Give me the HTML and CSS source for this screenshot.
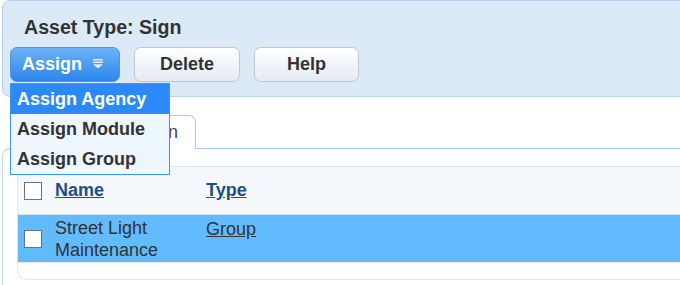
FILE: index.html
```html
<!DOCTYPE html>
<html lang="en">
<head>
    <meta charset="UTF-8">
    <title>Asset Type: Sign</title>
    <link rel="stylesheet" href="styles.css">
</head>
<body>
    <div class="header">
        <h2>Asset Type: Sign</h2>
        <div class="toolbar">
            <div class="menu-wrap">
                <button class="btn btn-primary">Assign
                    <svg class="menu-icon" width="10" height="10" viewBox="0 0 10 10">
                        <rect x="0" y="0" width="10" height="1.4" fill="#fff" opacity="0.85"/>
                        <rect x="0" y="2.6" width="10" height="1.4" fill="#fff" opacity="0.85"/>
                        <path d="M0 5.2 H10 L5 9.6 Z" fill="#fff" opacity="0.85"/>
                    </svg>
                </button>
                <ul class="menu">
                    <li class="active">Assign Agency</li>
                    <li>Assign Module</li>
                    <li>Assign Group</li>
                </ul>
            </div>
            <button class="btn">Delete</button>
            <button class="btn btn-help">Help</button>
        </div>
    </div>

    <div class="tabs">
        <div class="tab">Association</div>
    </div>

    <div class="content">
        <div class="grid">
            <table>
                <thead>
                    <tr>
                        <th class="check"><span class="box"></span></th>
                        <th class="col-name"><a href="#">Name</a></th>
                        <th><a href="#">Type</a></th>
                    </tr>
                </thead>
                <tbody>
                    <tr class="selected">
                        <td class="check"><span class="box"></span></td>
                        <td class="col-name">Street Light<br>Maintenance</td>
                        <td><a href="#">Group</a></td>
                    </tr>
                </tbody>
            </table>
        </div>
    </div>
</body>
</html>
```

FILE: styles.css
```css
body {
    margin: 0;
    font-family: "Liberation Sans", Arial, sans-serif;
    font-size: 18px;
    color: #333;
    background-color: #fff;
    overflow: hidden;
}

.header {
    margin-left: 2px;
    margin-right: -12px;
    height: 97px;
    background-color: #dce9f6;
    border: 1px solid #b3d0ee;
    border-radius: 8px;
    box-sizing: border-box;
    padding: 14px 0 0 7px;
}

.header h2 {
    margin: 0 0 0 14px;
    font-size: 19.6px;
    line-height: 24px;
    color: #333;
}

.toolbar {
    display: flex;
    gap: 14px;
    margin-top: 8px;
}

.menu-wrap {
    position: relative;
}

.btn {
    height: 35px;
    width: 106px;
    padding: 0;
    font-family: inherit;
    font-size: 18px;
    font-weight: bold;
    color: #333;
    background: linear-gradient(#ffffff, #e4ebf4);
    border: 1px solid #c6c6c6;
    border-radius: 7px;
}

.btn-help {
    width: 105px;
}

.btn-primary {
    width: 110px;
    color: #fff;
    text-align: left;
    padding-left: 11px;
    background: linear-gradient(#6db2f7, #2b86ec);
    border-color: #4b94e3;
}

.menu-icon {
    margin-left: 6px;
    vertical-align: 1px;
}

.menu {
    position: absolute;
    top: 36px;
    left: 0;
    width: 158px;
    margin: 0;
    padding: 0;
    list-style: none;
    background-color: #eef6fe;
    border: 1px solid #3a95f6;
    z-index: 2;
}

.menu li {
    height: 30px;
    line-height: 30px;
    padding-left: 6px;
    font-weight: bold;
    color: #333;
}

.menu li.active {
    background-color: #2b8af7;
    color: #fff;
}

.tabs {
    display: flex;
    margin-top: 18px;
    padding-left: 10px;
}

.tab {
    position: relative;
    width: 186px;
    height: 34px;
    margin-bottom: -1px;
    box-sizing: border-box;
    padding: 6px 17px 0 0;
    text-align: right;
    color: #444;
    background-color: #fff;
    border: 1px solid #a9cbec;
    border-bottom: none;
    border-radius: 7px 7px 0 0;
}

.content {
    margin-left: 2px;
    height: 137px;
    border-top: 1px solid #a9cbec;
    border-left: 1px solid #c9dcef;
    border-top-left-radius: 8px;
    padding: 17px 0 0 14px;
    box-sizing: border-box;
}

.grid {
    height: 114px;
    border-left: 1px solid #dbe7f3;
    border-bottom: 1px solid #dbe7f3;
    border-bottom-left-radius: 10px;
    box-sizing: border-box;
}

.grid table {
    width: 100%;
    border-collapse: collapse;
}

th, td {
    text-align: left;
    vertical-align: middle;
    padding: 0;
}

thead tr {
    height: 48px;
    background-color: #f5f9fd;
    border-top: 1px solid #d5e6f6;
}

thead a {
    color: #1b4e8c;
    font-weight: bold;
}

tbody tr.selected {
    height: 48px;
    background-color: #62bbfe;
    border-top: 1px solid #d8e2ec;
    border-bottom: 1px solid #e8e8e8;
}

tbody td {
    line-height: 22px;
}

tbody a {
    color: #333;
}

tbody tr.selected td:last-child {
    vertical-align: top;
    padding-top: 3px;
}

.check {
    width: 37px;
    padding-left: 6px;
    box-sizing: border-box;
}

.col-name {
    width: 151px;
}

.box {
    display: block;
    width: 16px;
    height: 16px;
    background-color: #fff;
    border: 1px solid #6f6f6f;
}
```
